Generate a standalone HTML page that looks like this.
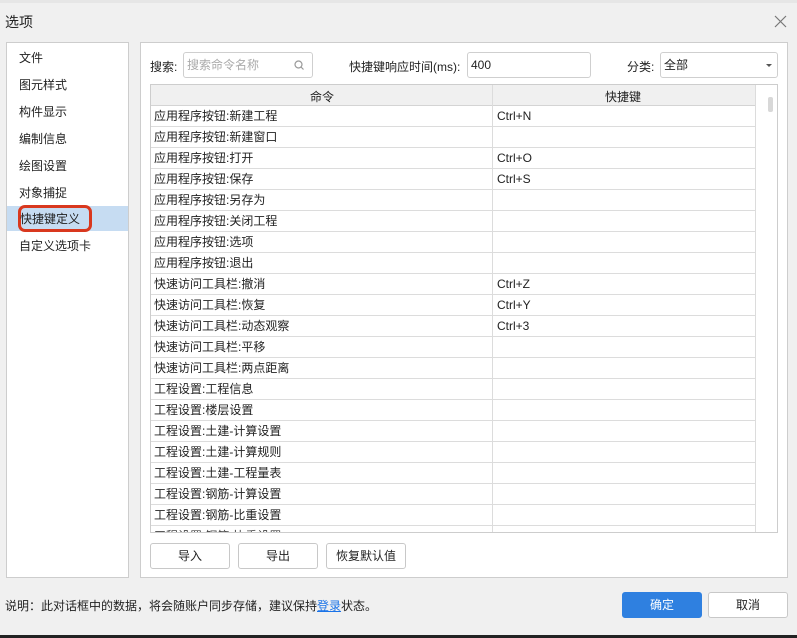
<!DOCTYPE html>
<html><head><meta charset="utf-8"><style>
*{margin:0;padding:0;box-sizing:border-box}
body{width:797px;height:638px;background:#f0f0f0;font-family:"Liberation Sans","Noto Sans CJK SC",sans-serif;font-size:12px;color:#222;position:relative;overflow:hidden}
.a{position:absolute}
.panel{background:#fff;border:1px solid #cdcdcd}
.li{position:absolute;left:19px;font-size:12px}
.row{position:absolute;left:151px;width:604px;height:21px;border-bottom:1px solid #dcdcdc;background:#fff;line-height:20px}
.row span{position:absolute;left:3px;top:0}
.row b{font-weight:normal;position:absolute;left:346px;top:0}
.inp{position:absolute;height:26px;border:1px solid #cfcfcf;border-radius:3px;background:#fff;padding-left:3px;line-height:24px}
.btn{position:absolute;height:26px;background:#fff;border:1px solid #c8c8c8;border-radius:3px;text-align:center;line-height:24px}
</style></head><body>
<div class="a" style="left:0;top:0;width:797px;height:3px;background:#e6e6e6"></div>
<div class="a" style="left:5px;top:12px;font-size:14px">选项</div>
<svg class="a" style="left:774px;top:15px" width="13" height="13"><path d="M1 1L12 12M12 1L1 12" stroke="#777" stroke-width="1.2"/></svg>
<div class="a panel" style="left:6px;top:42px;width:123px;height:536px"></div>
<div class="li" style="top:49px">文件</div>
<div class="li" style="top:76px">图元样式</div>
<div class="li" style="top:103px">构件显示</div>
<div class="li" style="top:130px">编制信息</div>
<div class="li" style="top:157px">绘图设置</div>
<div class="li" style="top:184px">对象捕捉</div>
<div class="a" style="left:7px;top:206px;width:121px;height:25px;background:#c6dcf2"></div>
<div class="a" style="left:18px;top:205px;width:74px;height:27px;border:3px solid #d9381e;border-radius:7px"></div>
<div class="li" style="top:210px;left:20px">快捷键定义</div>
<div class="li" style="top:237px">自定义选项卡</div>
<div class="a panel" style="left:140px;top:42px;width:648px;height:536px"></div>
<div class="a" style="left:150px;top:58px">搜索:</div>
<div class="inp" style="left:183px;top:52px;width:130px;color:#aaa">搜索命令名称</div>
<svg class="a" style="left:294px;top:60px" width="10" height="10"><circle cx="4.5" cy="4.5" r="3.5" fill="none" stroke="#999" stroke-width="1.2"/><path d="M7 7L9.5 9.5" stroke="#999" stroke-width="1.2"/></svg>
<div class="a" style="left:349px;top:58px">快捷键响应时间(ms):</div>
<div class="inp" style="left:467px;top:52px;width:124px">400</div>
<div class="a" style="left:627px;top:58px">分类:</div>
<div class="inp" style="left:660px;top:52px;width:118px">全部</div>
<div class="a" style="left:766px;top:64px;border-left:3px solid transparent;border-right:3px solid transparent;border-top:3px solid #555"></div>
<div class="a" style="left:150px;top:84px;width:628px;height:449px;border:1px solid #cdcdcd;background:#fff"></div>
<div class="a" style="left:151px;top:85px;width:604px;height:21px;background:#f0f0f0;border-bottom:1px solid #d4d4d4"></div>
<div class="a" style="left:310px;top:88px">命令</div>
<div class="a" style="left:605px;top:88px">快捷键</div>
<div class="a" style="left:492px;top:85px;width:1px;height:447px;background:#dcdcdc;z-index:2"></div>
<div class="a" style="left:755px;top:85px;width:1px;height:447px;background:#dcdcdc"></div>
<div class="a" style="left:768px;top:97px;width:5px;height:15px;background:#d8d8d8;border-radius:2px"></div>
<div class="row" style="top:106px"><span>应用程序按钮:新建工程</span><b>Ctrl+N</b></div>
<div class="row" style="top:127px"><span>应用程序按钮:新建窗口</span></div>
<div class="row" style="top:148px"><span>应用程序按钮:打开</span><b>Ctrl+O</b></div>
<div class="row" style="top:169px"><span>应用程序按钮:保存</span><b>Ctrl+S</b></div>
<div class="row" style="top:190px"><span>应用程序按钮:另存为</span></div>
<div class="row" style="top:211px"><span>应用程序按钮:关闭工程</span></div>
<div class="row" style="top:232px"><span>应用程序按钮:选项</span></div>
<div class="row" style="top:253px"><span>应用程序按钮:退出</span></div>
<div class="row" style="top:274px"><span>快速访问工具栏:撤消</span><b>Ctrl+Z</b></div>
<div class="row" style="top:295px"><span>快速访问工具栏:恢复</span><b>Ctrl+Y</b></div>
<div class="row" style="top:316px"><span>快速访问工具栏:动态观察</span><b>Ctrl+3</b></div>
<div class="row" style="top:337px"><span>快速访问工具栏:平移</span></div>
<div class="row" style="top:358px"><span>快速访问工具栏:两点距离</span></div>
<div class="row" style="top:379px"><span>工程设置:工程信息</span></div>
<div class="row" style="top:400px"><span>工程设置:楼层设置</span></div>
<div class="row" style="top:421px"><span>工程设置:土建-计算设置</span></div>
<div class="row" style="top:442px"><span>工程设置:土建-计算规则</span></div>
<div class="row" style="top:463px"><span>工程设置:土建-工程量表</span></div>
<div class="row" style="top:484px"><span>工程设置:钢筋-计算设置</span></div>
<div class="row" style="top:505px"><span>工程设置:钢筋-比重设置</span></div>
<div class="a" style="left:151px;top:527px;width:341px;height:5px;overflow:hidden;background:#fff"><div style="position:relative;top:-1px;left:3px;color:#444;line-height:20px">工程设置:钢筋-比重设置</div></div>
<div class="btn" style="left:150px;top:543px;width:80px">导入</div>
<div class="btn" style="left:238px;top:543px;width:80px">导出</div>
<div class="btn" style="left:326px;top:543px;width:80px">恢复默认值</div>
<div class="a" style="left:5px;top:597px">说明：此对话框中的数据，将会随账户同步存储，建议保持<span style="color:#1a73e8;text-decoration:underline">登录</span>状态。</div>
<div class="btn" style="left:622px;top:592px;width:80px;background:#2f80e0;border-color:#2f80e0;color:#fff">确定</div>
<div class="btn" style="left:708px;top:592px;width:80px">取消</div>
<div class="a" style="left:0;top:635px;width:797px;height:3px;background:#222"></div>
</body></html>
